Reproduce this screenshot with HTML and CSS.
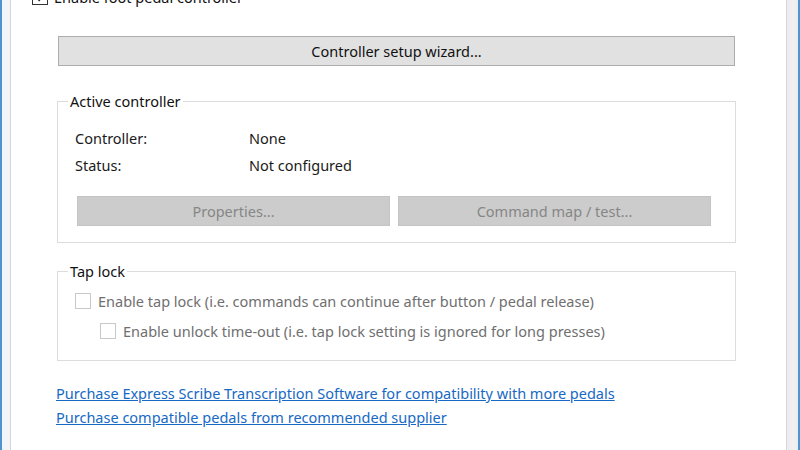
FILE: index.html
```html
<!DOCTYPE html>
<html>
<head>
<meta charset="utf-8">
<link rel="stylesheet" href="styles.css">
</head>
<body>
<div class="frame">
  <div class="edge-left"></div>
  <div class="content">
    <label class="check-row top-row">
      <span class="box checked">
        <svg width="11" height="11" viewBox="0 0 11 11"><path d="M1.5 5.5 L4.2 8.3 L9.5 2.2" fill="none" stroke="#222" stroke-width="1.6"/></svg>
      </span>
      <span>Enable foot pedal controller</span>
    </label>

    <button class="btn wizard">Controller setup wizard...</button>

    <fieldset class="group active-group">
      <legend>Active controller</legend>
      <div class="group-body">
        <div class="info-row"><span class="info-label">Controller:</span><span>None</span></div>
        <div class="info-row"><span class="info-label">Status:</span><span>Not configured</span></div>
        <div class="btn-row">
          <button class="btn disabled">Properties...</button>
          <button class="btn disabled">Command map / test...</button>
        </div>
      </div>
    </fieldset>

    <fieldset class="group tap-group">
      <legend>Tap lock</legend>
      <div class="group-body">
        <label class="check-row dis">
          <span class="box"></span>
          <span>Enable tap lock (i.e. commands can continue after button / pedal release)</span>
        </label>
        <label class="check-row dis indent">
          <span class="box"></span>
          <span>Enable unlock time-out (i.e. tap lock setting is ignored for long presses)</span>
        </label>
      </div>
    </fieldset>

    <div class="links">
      <a href="#">Purchase Express Scribe Transcription Software for compatibility with more pedals</a>
      <a href="#">Purchase compatible pedals from recommended supplier</a>
    </div>
  </div>
  <div class="edge-right"></div>
</div>
</body>
</html>
```
FILE: styles.css
```css
html, body {
  margin: 0;
  padding: 0;
  width: 800px;
  height: 450px;
  overflow: hidden;
  background: #ffffff;
}
body {
  font-family: "Noto Sans", "DejaVu Sans", sans-serif;
  font-size: 14.5px;
  color: #1a1a1a;
}
.frame {
  display: flex;
  height: 450px;
}
.edge-left {
  width: 8px;
  background: #f4f5f8;
  border-left: 2px solid #4f93cf;
  border-right: 1px solid #d6d6d6;
}
.edge-right {
  width: 11px;
  background: linear-gradient(90deg, #eceaf3 0%, #f3f1ef 60%, #e4eef2 100%);
  border-left: 1px solid #d6d6d6;
  border-right: 2px solid #4f93cf;
}
.content {
  flex: 1;
  display: flex;
  flex-direction: column;
  align-items: flex-start;
  background: #ffffff;
}
.check-row {
  display: flex;
  align-items: center;
  gap: 6px;
  height: 20px;
  line-height: 20px;
}
.top-row {
  margin-top: -13px;
  margin-left: 21px;
  color: #111;
}
.box {
  width: 16px;
  height: 16px;
  box-sizing: border-box;
  border: 1px solid #c9c9c9;
  background: #fff;
  display: flex;
  align-items: center;
  justify-content: center;
  flex: none;
}
.box.checked {
  border: 1px solid #333;
}
.btn {
  font-family: inherit;
  font-size: 14.5px;
  box-sizing: border-box;
  height: 30px;
  padding: 0;
  margin: 0;
  border: 1px solid #adadad;
  background: #e1e1e1;
  color: #111;
}
.wizard {
  margin-top: 29px;
  margin-left: 47px;
  width: 677px;
}
.group {
  margin: 0 0 0 46px;
  width: 679px;
  box-sizing: border-box;
  border: 1px solid #dcdcdc;
  padding: 0;
  min-width: 0;
}
.group legend {
  margin-left: 10px;
  padding: 0 2px;
  line-height: 18px;
  color: #111;
}
.active-group {
  margin-top: 26px;
}
.active-group .group-body {
  padding: 18px 24px 16px 17px;
}
.info-row {
  display: flex;
  height: 20px;
  line-height: 20px;
  margin-bottom: 7px;
}
.info-row + .info-row {
  margin-bottom: 0;
}
.info-label {
  width: 174px;
}
.btn-row {
  display: flex;
  gap: 8px;
  margin-top: 21px;
  margin-left: 2px;
}
.btn.disabled {
  width: 313px;
  background: #cccccc;
  border-color: #c4c4c4;
  color: #868686;
}
.tap-group {
  margin-top: 19px;
}
.tap-group .group-body {
  padding: 11px 10px 19px 17px;
}
.check-row.dis {
  color: #6f6f6f;
  gap: 7px;
}
.check-row.indent {
  margin-top: 10px;
  margin-left: 25px;
}
.links {
  display: flex;
  flex-direction: column;
  gap: 4px;
  margin-top: 22px;
  margin-left: 45px;
}
.links a {
  color: #1769c4;
  text-decoration: underline;
  line-height: 20px;
}
```
